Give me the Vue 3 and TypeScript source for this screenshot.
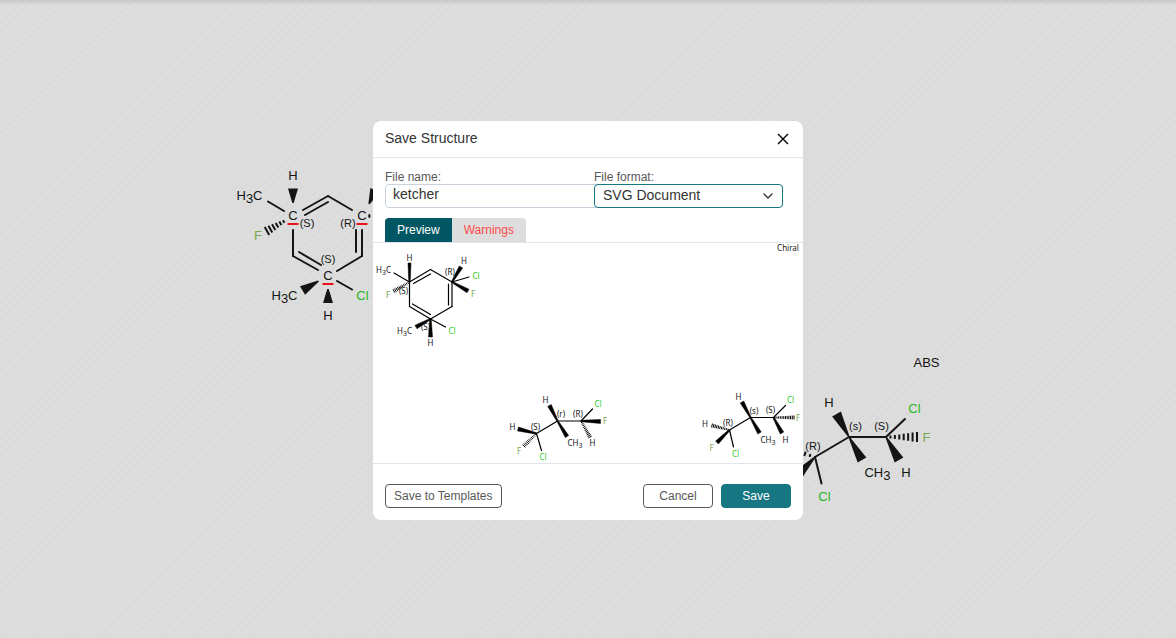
<script setup lang="ts">
import { ref } from 'vue'

type Point = [number, number]
interface Label { t: string; x: number; y: number; kind?: 'cl' | 'f' | 'stereo' }
interface Wedge { from: Point; to: Point; w: number }
interface Hash extends Wedge { n: number }
interface Drawing { bonds: number[][]; wedges: Wedge[]; hashes: Hash[]; labels: Label[] }

const fileName = ref('ketcher')
const format = ref('SVG Document')
const formats = ['SVG Document', 'PNG Image', 'MDL Molfile V2000', 'Daylight SMILES']
const tab = ref<'preview' | 'warnings'>('preview')

const canvas: Drawing = {
  bonds: [
    [268, 201.5, 284, 211], [303, 210, 328, 196], [305, 215, 328, 202], [328, 196, 352, 210],
    [293, 230, 293, 256], [293, 256, 318, 270], [299, 252, 321, 265],
    [362, 230, 362, 256], [356, 230, 356, 252], [362, 256, 337, 271], [337, 281, 352, 289.5],
    [815, 457, 849, 437], [849, 437, 886, 437], [886, 437, 905, 419], [815, 457, 821.5, 483.5],
  ],
  wedges: [
    { from: [293, 203], to: [293, 188.5], w: 10 },
    { from: [328, 289], to: [328, 303], w: 10 },
    { from: [318.5, 281], to: [302.5, 290.5], w: 10 },
    { from: [369, 204], to: [375, 190], w: 10 },
    { from: [849, 437], to: [836.5, 414], w: 10 },
    { from: [849, 437], to: [862, 460], w: 10 },
    { from: [886, 437], to: [899, 460], w: 10 },
    { from: [815, 457], to: [798, 475], w: 10 },
  ],
  hashes: [
    { from: [287, 219.5], to: [267, 231], w: 9, n: 6 },
    { from: [886, 437], to: [917, 437], w: 10, n: 7 },
    { from: [815, 457], to: [790, 449], w: 9, n: 5 },
    { from: [364, 216], to: [380, 216], w: 8, n: 3 },
  ],
  labels: [
    { t: 'H', x: 293, y: 175 }, { t: 'H3C', x: 249.5, y: 195 }, { t: 'C', x: 293, y: 215 },
    { t: 'C', x: 362, y: 215 }, { t: 'C', x: 328, y: 275 }, { t: 'H', x: 328, y: 315 },
    { t: 'H3C', x: 284.5, y: 295 }, { t: 'Cl', x: 362.5, y: 295, kind: 'cl' },
    { t: 'F', x: 258, y: 235, kind: 'f' }, { t: '(S)', x: 307, y: 223, kind: 'stereo' },
    { t: '(R)', x: 348, y: 223, kind: 'stereo' }, { t: '(S)', x: 328, y: 259, kind: 'stereo' },
    { t: 'ABS', x: 926.5, y: 362 }, { t: 'H', x: 829, y: 402 },
    { t: '(s)', x: 855.5, y: 426, kind: 'stereo' }, { t: '(S)', x: 881.5, y: 426, kind: 'stereo' },
    { t: 'Cl', x: 914.5, y: 408, kind: 'cl' }, { t: 'F', x: 926.5, y: 437, kind: 'f' },
    { t: 'H', x: 906, y: 472 }, { t: 'CH3', x: 877.5, y: 472 },
    { t: '(R)', x: 813, y: 446, kind: 'stereo' }, { t: 'Cl', x: 824.5, y: 496, kind: 'cl' },
  ],
}
const marks: number[][] = [[287.5, 224, 298.5, 224], [356.5, 224, 367.5, 224], [322.5, 284, 333.5, 284]]

const preview: Drawing = {
  bonds: [
    [36.5, 39, 57.5, 26.5], [40.5, 40.5, 57.5, 31], [57.5, 26.5, 79, 39], [79, 39, 79, 63.5],
    [75.5, 41, 75.5, 62], [79, 63.5, 57.5, 76], [57.5, 76, 36.5, 63.5], [57.5, 71.5, 39.5, 61],
    [36.5, 63.5, 36.5, 39], [21, 30, 36.5, 39], [79, 39, 96, 34], [57.5, 76, 72.5, 84],
    [163.5, 190.5, 184.5, 178], [184.5, 178, 208, 178], [208, 178, 219.5, 166], [163.5, 190.5, 168.5, 207.5],
    [356.5, 187, 377.5, 174.5], [377.5, 174.5, 400.5, 174.5], [400.5, 174.5, 412.5, 162.5], [356.5, 187, 360.5, 204],
  ],
  wedges: [
    { from: [36.5, 39], to: [36.5, 20], w: 3 }, { from: [79, 39], to: [88, 24], w: 4 },
    { from: [79, 39], to: [95, 48], w: 4 }, { from: [57.5, 76], to: [43, 84], w: 4 },
    { from: [57.5, 76], to: [57.5, 94], w: 4 }, { from: [184.5, 178], to: [176.5, 162.5], w: 4 },
    { from: [184.5, 178], to: [194, 193.5], w: 4 }, { from: [208, 178], to: [227.5, 178.5], w: 4 },
    { from: [163.5, 190.5], to: [145, 186], w: 4 }, { from: [377.5, 174.5], to: [369, 159], w: 4 },
    { from: [377.5, 174.5], to: [386.5, 190], w: 4 }, { from: [400.5, 174.5], to: [409, 190], w: 4 },
    { from: [356.5, 187], to: [344, 199.5], w: 4 },
  ],
  hashes: [
    { from: [36.5, 39], to: [21, 48], w: 4, n: 11 }, { from: [163.5, 190.5], to: [151, 203], w: 4, n: 11 },
    { from: [208, 178], to: [217, 194], w: 4, n: 11 }, { from: [356.5, 187], to: [339, 182.5], w: 4, n: 11 },
    { from: [400.5, 174.5], to: [421, 174.5], w: 4, n: 12 },
  ],
  labels: [
    { t: 'Chiral', x: 415, y: 5 }, { t: 'H', x: 36.5, y: 14.5 }, { t: 'H3C', x: 10.5, y: 26.5 },
    { t: 'F', x: 15, y: 51.5, kind: 'f' }, { t: '(S)', x: 30.5, y: 48, kind: 'stereo' },
    { t: 'H', x: 91, y: 17.5 }, { t: 'Cl', x: 103, y: 32.5, kind: 'cl' }, { t: 'F', x: 100, y: 51, kind: 'f' },
    { t: '(R)', x: 77, y: 29, kind: 'stereo' }, { t: 'H3C', x: 31.5, y: 88 },
    { t: '(S)', x: 52.5, y: 84, kind: 'stereo' }, { t: 'Cl', x: 79, y: 88, kind: 'cl' }, { t: 'H', x: 57.5, y: 100 },
    { t: 'H', x: 172.5, y: 157 }, { t: '(r)', x: 188, y: 171, kind: 'stereo' },
    { t: '(R)', x: 205, y: 171, kind: 'stereo' }, { t: 'Cl', x: 225, y: 161, kind: 'cl' },
    { t: 'F', x: 232, y: 178, kind: 'f' }, { t: 'H', x: 219.5, y: 200 }, { t: 'CH3', x: 202, y: 200 },
    { t: 'H', x: 139.5, y: 184 }, { t: '(S)', x: 162.5, y: 183.5, kind: 'stereo' },
    { t: 'F', x: 146, y: 208, kind: 'f' }, { t: 'Cl', x: 170, y: 214, kind: 'cl' },
    { t: 'H', x: 365.5, y: 153.5 }, { t: '(s)', x: 381, y: 167.5, kind: 'stereo' },
    { t: '(S)', x: 397.5, y: 167, kind: 'stereo' }, { t: 'Cl', x: 417.5, y: 157, kind: 'cl' },
    { t: 'F', x: 425, y: 174.5, kind: 'f' }, { t: 'H', x: 412.5, y: 196.5 }, { t: 'CH3', x: 395, y: 196.5 },
    { t: 'H', x: 332, y: 181 }, { t: '(R)', x: 355, y: 179.5, kind: 'stereo' },
    { t: 'F', x: 338.5, y: 204.5, kind: 'f' }, { t: 'Cl', x: 362.5, y: 211, kind: 'cl' },
  ],
}

function normal(from: Point, to: Point): Point {
  const dx = to[0] - from[0]
  const dy = to[1] - from[1]
  const len = Math.hypot(dx, dy)
  return [-dy / len, dx / len]
}

// A solid bond with a narrow blunt tip that widens towards its far end.
function wedgePath({ from, to, w }: Wedge): string {
  const [nx, ny] = normal(from, to)
  const h = w / 2
  const a = 0.7
  return `M${from[0] + nx * a} ${from[1] + ny * a}L${to[0] + nx * h} ${to[1] + ny * h}`
    + `L${to[0] - nx * h} ${to[1] - ny * h}L${from[0] - nx * a} ${from[1] - ny * a}Z`
}

function hashPath({ from, to, w, n }: Hash): string {
  const [nx, ny] = normal(from, to)
  let d = ''
  for (let i = 1; i <= n; i++) {
    const k = i / n
    const h = 0.8 + (w / 2 - 0.8) * k
    const x = from[0] + (to[0] - from[0]) * k
    const y = from[1] + (to[1] - from[1]) * k
    d += `M${x + nx * h} ${y + ny * h}L${x - nx * h} ${y - ny * h}`
  }
  return d
}

// Splits a formula so that digits can be set as subscripts.
function parts(t: string): { s: string; dy: number }[] {
  let low = false
  return t.split(/(\d)/).filter(Boolean).map((s) => {
    const digit = /\d/.test(s)
    const dy = digit === low ? 0 : digit ? 1 : -1
    low = digit
    return { s, dy }
  })
}
</script>

<template>
  <div class="editor">
    <svg class="canvas" viewBox="0 0 1176 638" preserveAspectRatio="xMidYMid slice" aria-label="Structure canvas">
      <line v-for="(b, i) in canvas.bonds" :key="'b' + i" class="bond" :x1="b[0]" :y1="b[1]" :x2="b[2]" :y2="b[3]" />
      <path v-for="(w, i) in canvas.wedges" :key="'w' + i" class="wedge" :d="wedgePath(w)" />
      <path v-for="(h, i) in canvas.hashes" :key="'h' + i" class="bond hash" :d="hashPath(h)" />
      <line v-for="(m, i) in marks" :key="'m' + i" class="mark" :x1="m[0]" :y1="m[1]" :x2="m[2]" :y2="m[3]" />
      <text v-for="(l, i) in canvas.labels" :key="'l' + i" :class="['atom', l.kind]" :x="l.x" :y="l.y + (l.kind === 'stereo' ? 4 : 5)"><tspan v-for="(p, j) in parts(l.t)" :key="j" :dy="p.dy * 3">{{ p.s }}</tspan></text>
    </svg>

    <form class="dialog" role="dialog" aria-labelledby="dialog-title" @submit.prevent>
      <header class="head">
        <h1 id="dialog-title">Save Structure</h1>
        <button type="button" class="close" aria-label="Close">
          <svg viewBox="0 0 12 12"><path d="M1 1L11 11M11 1L1 11" /></svg>
        </button>
      </header>

      <div class="fields">
        <div class="field name">
          <label for="file-name">File name:</label>
          <input id="file-name" v-model="fileName" type="text">
        </div>
        <div class="field format">
          <label for="file-format">File format:</label>
          <select id="file-format" v-model="format">
            <option v-for="f in formats" :key="f">{{ f }}</option>
          </select>
          <svg class="chevron" viewBox="0 0 10 6"><path d="M1 1L5 5L9 1" /></svg>
        </div>
      </div>

      <div class="tabs" role="tablist">
        <button type="button" role="tab" :class="{ active: tab === 'preview' }" :aria-selected="tab === 'preview'" @click="tab = 'preview'">Preview</button>
        <button type="button" role="tab" class="warn" :class="{ active: tab === 'warnings' }" :aria-selected="tab === 'warnings'" @click="tab = 'warnings'">Warnings</button>
      </div>

      <div class="preview" role="tabpanel">
        <svg viewBox="0 0 430 220" aria-label="Structure preview">
          <line v-for="(b, i) in preview.bonds" :key="'b' + i" class="bond" :x1="b[0]" :y1="b[1]" :x2="b[2]" :y2="b[3]" />
          <path v-for="(w, i) in preview.wedges" :key="'w' + i" class="wedge" :d="wedgePath(w)" />
          <path v-for="(h, i) in preview.hashes" :key="'h' + i" class="bond hash" :d="hashPath(h)" />
          <text v-for="(l, i) in preview.labels" :key="'l' + i" :class="['atom', l.kind]" :x="l.x" :y="l.y + 3"><tspan v-for="(p, j) in parts(l.t)" :key="j" :dy="p.dy * 2" :class="{ sub: p.dy > 0 }">{{ p.s }}</tspan></text>
        </svg>
      </div>

      <footer class="foot">
        <button type="button" class="btn templates">Save to Templates</button>
        <button type="button" class="btn">Cancel</button>
        <button type="submit" class="btn primary">Save</button>
      </footer>
    </form>
  </div>
</template>

<style>
body {
  background: #dcdcdc;
}
</style>

<style scoped>
.editor {
  position: relative;
  box-sizing: border-box;
  min-height: 100vh;
  padding-top: 3px;
  display: flex;
  align-items: center;
  justify-content: center;
  overflow: hidden;
  font-family: "Liberation Sans", Arial, sans-serif;
  color: #333;
  background:
    linear-gradient(rgba(0, 0, 0, 0.1), rgba(0, 0, 0, 0)) top / 100% 5px no-repeat,
    repeating-linear-gradient(135deg, #ddd 0, #ddd 3px, #d9d9d9 5px, #ddd 6px);
}
.canvas {
  position: absolute;
  inset: 0;
  width: 100%;
  height: 100%;
}
.bond {
  stroke: #141414;
  stroke-width: 2;
  stroke-linecap: round;
  fill: none;
}
.hash {
  stroke-linecap: butt;
}
.wedge {
  fill: #141414;
}
.mark {
  stroke: #e8141c;
  stroke-width: 2;
}
.atom {
  font-size: 13px;
  text-anchor: middle;
  fill: #141414;
}
.cl {
  fill: #1fb81f;
}
.f {
  fill: #78a84c;
}
.stereo {
  font-size: 11px;
}
.dialog {
  position: relative;
  box-sizing: border-box;
  width: 430px;
  max-width: 100%;
  background: #fff;
  border-radius: 8px;
  overflow: hidden;
}
.head {
  display: flex;
  align-items: center;
  justify-content: space-between;
  height: 36px;
  padding: 0 12px;
  border-bottom: 1px solid #e1e5ea;
}
h1 {
  margin: 0;
  padding-bottom: 2px;
  font-size: 14px;
  line-height: 32px;
  font-weight: 400;
}
button {
  font-family: inherit;
  font-size: 12px;
  cursor: pointer;
}
.close {
  display: flex;
  width: 16px;
  height: 16px;
  padding: 2px;
  border: 0;
  background: none;
}
.close svg {
  width: 12px;
  height: 12px;
}
.close path {
  fill: none;
  stroke: #000;
  stroke-width: 1.4;
}
.fields {
  display: flex;
  padding: 12px 20px 10px 12px;
}
.field {
  display: grid;
}
.field label {
  font-size: 12px;
  line-height: 14px;
  color: #585858;
}
.name {
  flex: 1;
}
.name input {
  box-sizing: border-box;
  width: calc(100% + 8px);
  height: 24px;
  padding: 0 7px 4px;
  border: 1px solid #cad3dd;
  border-radius: 4px;
  font: 14px "Liberation Sans", Arial, sans-serif;
  color: #333;
  outline: none;
}
.format {
  position: relative;
  width: 189px;
}
.format select {
  appearance: none;
  box-sizing: border-box;
  width: 100%;
  height: 24px;
  padding: 0 28px 2px 8px;
  border: 1px solid #167782;
  border-radius: 4px;
  background: #fff;
  font: 14px "Liberation Sans", Arial, sans-serif;
  color: #333;
  outline: none;
}
.chevron {
  position: absolute;
  right: 10px;
  bottom: 9px;
  width: 10px;
  height: 6px;
  pointer-events: none;
}
.chevron path {
  fill: none;
  stroke: #333;
  stroke-width: 1.4;
  stroke-linecap: round;
}
.tabs {
  display: flex;
  padding: 0 12px;
}
.tabs button {
  height: 24px;
  padding: 0 12px;
  border: 0;
  background: #ddd;
  color: #333;
}
.tabs button:first-child {
  border-radius: 4px 0 0 0;
}
.tabs button:last-child {
  border-radius: 0 4px 0 0;
}
.tabs .warn {
  color: #ff4a4a;
}
.tabs .active {
  background: #005662;
  color: #fff;
}
.preview {
  border-top: 1px solid #e1e5ea;
  border-bottom: 1px solid #e1e5ea;
}
.preview svg {
  display: block;
  width: 100%;
}
.preview .bond {
  stroke: #000;
  stroke-width: 1.2;
}
.preview .hash {
  stroke-width: 1;
}
.preview .wedge {
  fill: #000;
  stroke: #000;
  stroke-width: 0.5;
}
.preview .atom {
  font-family: "Noto Sans", "Open Sans", sans-serif;
  font-size: 8px;
}
.preview .sub {
  font-size: 7px;
}
.preview .cl {
  fill: #1fd01f;
}
.foot {
  display: flex;
  gap: 8px;
  padding: 20px 12px 12px;
}
.btn {
  box-sizing: border-box;
  min-width: 70px;
  height: 24px;
  padding: 0 8px;
  border: 1px solid #585858;
  border-radius: 4px;
  background: #fff;
  color: #585858;
}
.templates {
  margin-right: auto;
}
.primary {
  border-color: #167782;
  background: #167782;
  color: #fff;
}
</style>
